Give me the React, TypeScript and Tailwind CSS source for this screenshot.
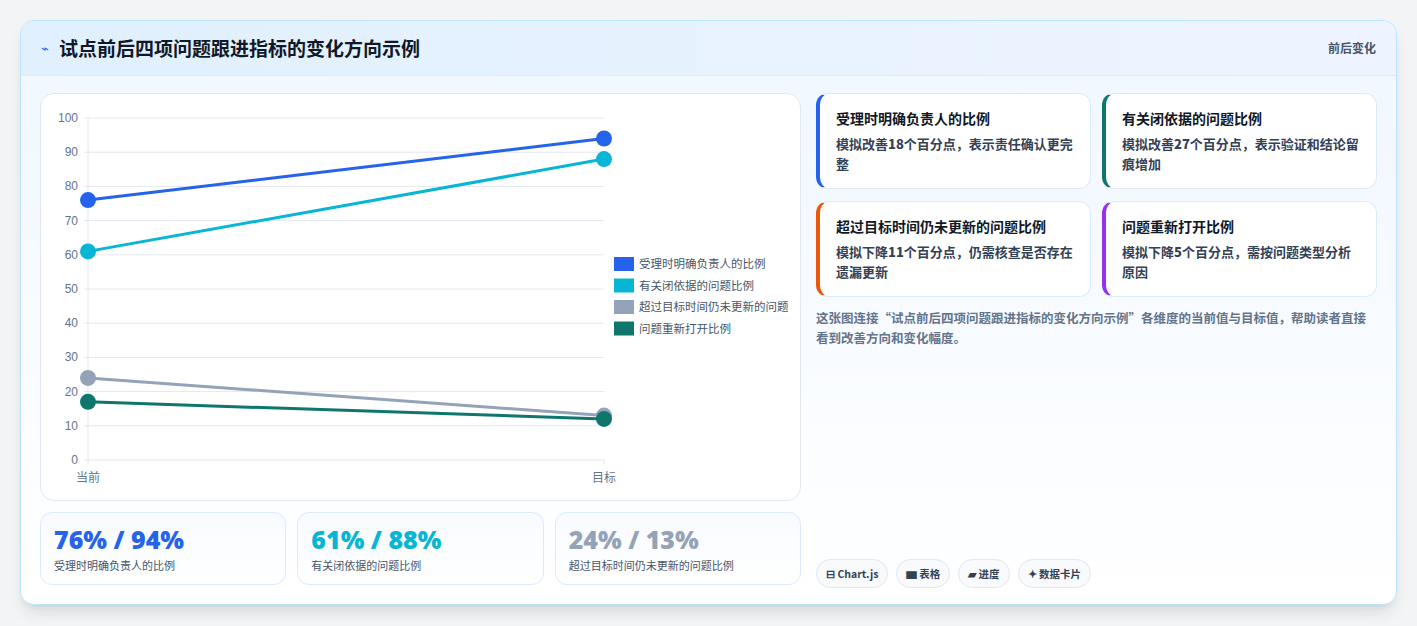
const F = { fontFamily: '"Noto Sans CJK SC", "Noto Sans", sans-serif' };
const series = [
  { n: "受理时明确负责人的比例", c: "#2563eb", a: 76, b: 94 },
  { n: "有关闭依据的问题比例", c: "#06b6d4", a: 61, b: 88 },
  { n: "超过目标时间仍未更新的问题比例", c: "#94a3b8", a: 24, b: 13 },
  { n: "问题重新打开比例", c: "#0f766e", a: 17, b: 12 },
];
function Chart() {
  const x0 = 47, x1 = 563, y = (v: number) => 366 - v * 3.42;
  return (
    <svg width="760" height="407" className="block" style={{ fontFamily: '"Liberation Sans", "Noto Sans CJK SC", sans-serif' }}>
      {[0,10,20,30,40,50,60,70,80,90,100].map(v => (
        <g key={v}>
          <line x1={x0 - 4} x2={x1} y1={y(v)} y2={y(v)} stroke="#e2e8f0" />
          <text x={x0 - 10} y={y(v) + 4} textAnchor="end" fontSize="12" fill="#64748b">{v}</text>
        </g>
      ))}
      <line x1={x0} x2={x0} y1={y(100)} y2={y(0) + 4} stroke="#e2e8f0" />
      <line x1={x1} x2={x1} y1={y(0)} y2={y(0) + 4} stroke="#e2e8f0" />
      <text x={x0} y={388} textAnchor="middle" fontSize="12" fill="#64748b" style={F}>当前</text>
      <text x={x1} y={388} textAnchor="middle" fontSize="12" fill="#64748b" style={F}>目标</text>
      {series.map(s => (
        <g key={s.n}>
          <line x1={x0} y1={y(s.a)} x2={x1} y2={y(s.b)} stroke={s.c} strokeWidth="3" />
          <circle cx={x0} cy={y(s.a)} r="8" fill={s.c} />
          <circle cx={x1} cy={y(s.b)} r="8" fill={s.c} />
        </g>
      ))}
      <clipPath id="lg"><rect x="570" y="150" width="178" height="100" /></clipPath>
      <g clipPath="url(#lg)">
        {series.map((s, i) => (
          <g key={s.n}>
            <rect x="573" y={163 + i * 21.5} width="20" height="14" fill={s.c} />
            <text x="598" y={174 + i * 21.5} fontSize="11.5" fill="#475569" style={F}>{s.n}</text>
          </g>
        ))}
      </g>
    </svg>
  );
}
const cards = [
  { t: "受理时明确负责人的比例", d: <>模拟改善<b>18</b>个百分点，表示责任确认更完整</>, c: "border-l-[#2563eb]" },
  { t: "有关闭依据的问题比例", d: <>模拟改善<b>27</b>个百分点，表示验证和结论留痕增加</>, c: "border-l-[#0f766e]" },
  { t: "超过目标时间仍未更新的问题比例", d: <>模拟下降<b>11</b>个百分点，仍需核查是否存在遗漏更新</>, c: "border-l-[#ea580c]" },
  { t: "问题重新打开比例", d: <>模拟下降<b>5</b>个百分点，需按问题类型分析原因</>, c: "border-l-[#9333ea]" },
];
export default function App() {
  return (
    <div className="w-[1417px] h-[626px] bg-[#f3f4f6] pt-[20px] pl-[20px]" style={F}>
      <div className="w-[1377px] h-[585px] rounded-[14px] border border-[#bae6fd] bg-gradient-to-b from-[#f0f7ff] to-white shadow-lg overflow-hidden flex flex-col">
        <div className="h-[55px] shrink-0 flex items-center justify-between px-[20px] bg-gradient-to-r from-[#e0f0fe] to-[#eef4ff] border-b border-[#dbeafe]">
          <div className="flex items-center gap-[10px]">
            <span className="text-[#2563eb] text-[13px]">⌁</span>
            <span className="text-[19px] font-bold text-[#111827]">试点前后四项问题跟进指标的变化方向示例</span>
          </div>
          <span className="text-[12px] font-semibold text-[#475569]">前后变化</span>
        </div>
        <div className="flex gap-[15px] px-[19px] pt-[17px]">
          <div className="w-[761px] flex flex-col gap-[11px]">
            <div className="h-[408px] rounded-[14px] border border-[#e2e8f0] bg-white overflow-hidden"><Chart /></div>
            <div className="grid grid-cols-3 gap-[11px]">
              {series.slice(0, 3).map(s => (
                <div key={s.n} className="h-[73px] rounded-[12px] border border-[#dbeafe] bg-gradient-to-b from-[#f8fbff] to-white px-[13px] pt-[10px]">
                  <div className="text-[25px] leading-[32px] font-extrabold" style={{ color: s.c, fontFamily: '"Open Sans","Noto Sans",sans-serif' }}>{s.a}% / {s.b}%</div>
                  <div className="text-[11px] text-[#475569] mt-[2px]">{s.n}</div>
                </div>
              ))}
            </div>
          </div>
          <div className="flex-1 flex flex-col">
            <div className="grid grid-cols-2 gap-x-[11px] gap-y-[12px]">
              {cards.map(c => (
                <div key={c.t} className={`h-[96px] rounded-[12px] border border-[#dbeafe] border-l-4 ${c.c} bg-white pl-[16px] pr-[14px] pt-[14px]`}>
                  <div className="text-[14px] font-bold text-[#111827] leading-[20px]">{c.t}</div>
                  <div className="text-[13px] font-semibold text-[#334155] leading-[20px] mt-[6px]">{c.d}</div>
                </div>
              ))}
            </div>
            <div className="text-[12.5px] leading-[20px] text-[#64748b] font-semibold mt-[11px]">这张图连接“试点前后四项问题跟进指标的变化方向示例”各维度的当前值与目标值，帮助读者直接看到改善方向和变化幅度。</div>
            <div className="flex gap-[8px] mt-[211px]">
              {["⊟ Chart.js", "▆ 表格", "▰ 进度", "✦ 数据卡片"].map(t => (
                <span key={t} className="h-[29px] px-[9px] rounded-full border border-[#e2e8f0] bg-[#f8fafc] text-[10.5px] font-bold text-[#334155] flex items-center">{t}</span>
              ))}
            </div>
          </div>
        </div>
      </div>
    </div>
  );
}
